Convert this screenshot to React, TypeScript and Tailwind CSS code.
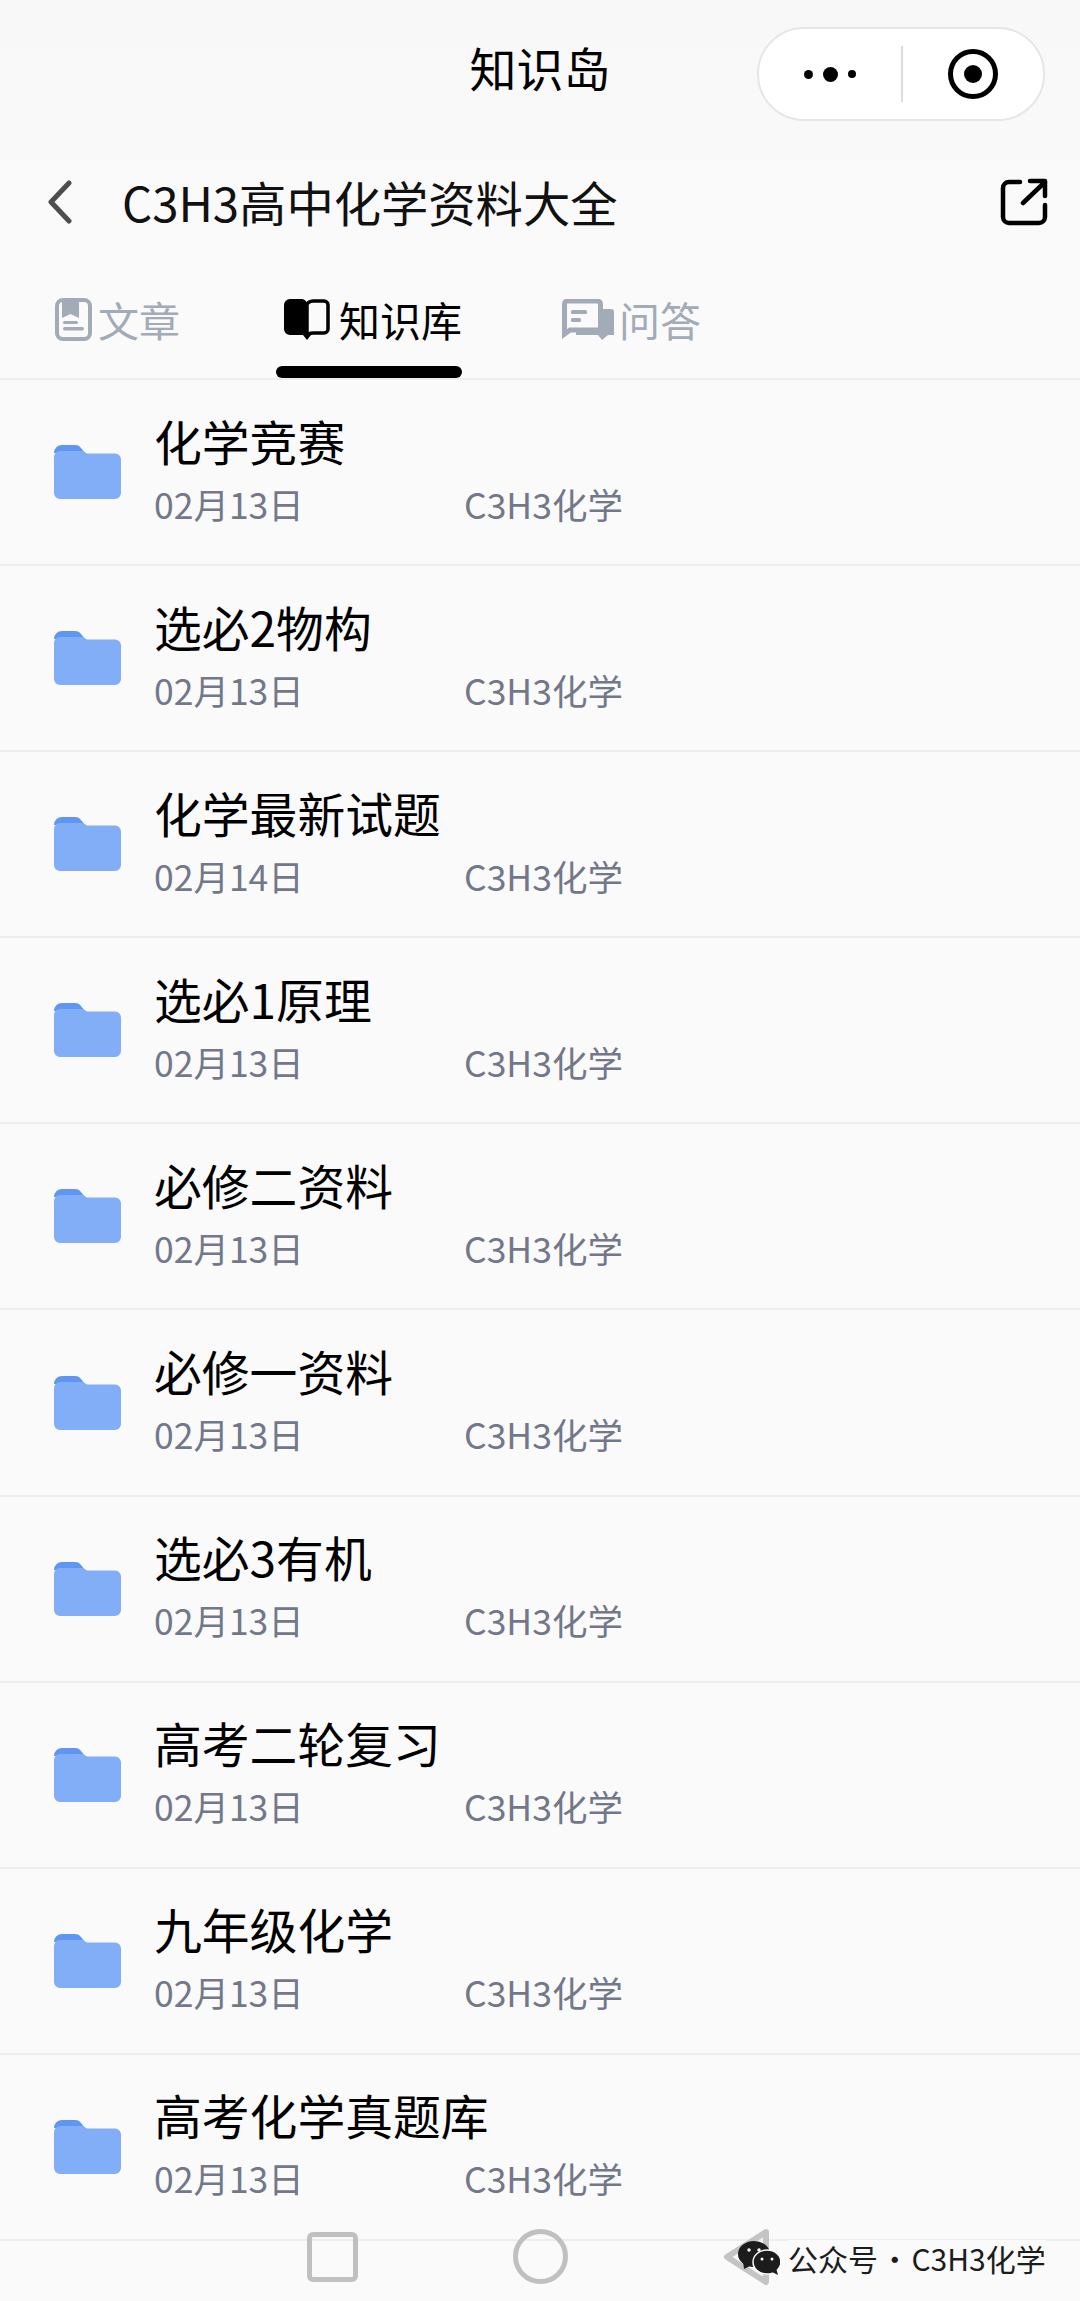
const CJK = "font-['Noto_Sans_CJK_SC','Noto_Sans',sans-serif]";

const rows = [
  ["化学竞赛", "02月13日"],
  ["选必2物构", "02月13日"],
  ["化学最新试题", "02月14日"],
  ["选必1原理", "02月13日"],
  ["必修二资料", "02月13日"],
  ["必修一资料", "02月13日"],
  ["选必3有机", "02月13日"],
  ["高考二轮复习", "02月13日"],
  ["九年级化学", "02月13日"],
  ["高考化学真题库", "02月13日"],
];

function FolderIcon() {
  return (
    <svg width="67" height="54" viewBox="0 0 67 54" className="shrink-0">
      <path d="M0 8a8 8 0 0 1 8-8h13c3 0 4.500 1 6 3l4 5H0z" fill="#5f96f2" />
      <path d="M0 12a6 6 0 0 1 6-6h23l4 2.500h28a6 6 0 0 1 6 6V48a6 6 0 0 1-6 6H6a6 6 0 0 1-6-6z" fill="#82aef8" />
    </svg>
  );
}

function ArticleIcon() {
  return (
    <svg width="37" height="43" viewBox="0 0 37 43" className="shrink-0">
      <rect x="2" y="2" width="33" height="39" rx="6" fill="none" stroke="#a3aab8" strokeWidth="4" />
      <path d="M7 3h17v17l-8.500-4L7 20z" fill="#a3aab8" />
      <rect x="8" y="23" width="15" height="3" rx="1.500" fill="#a3aab8" />
      <rect x="8" y="29" width="21" height="3.500" rx="1.700" fill="#a3aab8" />
    </svg>
  );
}

function BookIcon() {
  return (
    <svg width="46" height="42" viewBox="0 0 46 42" className="shrink-0">
      <path d="M6 1h11c3 0 6 2 6 5v34l-2-3H6a6 6 0 0 1-6-6V7a6 6 0 0 1 6-6z" fill="#000" />
      <path d="M23 35V7c0-2 3-4 6-4h11a4 4 0 0 1 4 4v24a4 4 0 0 1-4 4H29c-3 0-5 1-6 3z" fill="none" stroke="#000" strokeWidth="3.500" />
      <path d="M19 37h8l-4 5z" fill="#000" />
    </svg>
  );
}

function ChatIcon() {
  return (
    <svg width="52" height="41" viewBox="0 0 52 41" className="shrink-0">
      <path d="M2.500 28V5a3 3 0 0 1 3-3h30a3 3 0 0 1 3 3v26H8l-5.500 4z" fill="none" stroke="#a3aab8" strokeWidth="5" />
      <rect x="9" y="11" width="16" height="4" rx="1.500" fill="#a3aab8" />
      <rect x="9" y="19" width="10" height="4" rx="1.500" fill="#a3aab8" />
      <path d="M40 10h9a3 3 0 0 1 3 3v23h-6l-6 5-4-5H14v-3h26z" fill="#a3aab8" />
    </svg>
  );
}

function WeChatIcon() {
  return (
    <svg width="42" height="34" viewBox="0 0 42 34" className="shrink-0">
      <ellipse cx="16" cy="13" rx="16" ry="13" fill="#1c1c1c" />
      <path d="M5 20l1 8 8-4z" fill="#1c1c1c" />
      <ellipse cx="29" cy="21" rx="14" ry="12" fill="#1c1c1c" stroke="#fafafa" strokeWidth="1.500" />
      <path d="M34 31l6 3-2-7z" fill="#1c1c1c" />
      <circle cx="11" cy="9" r="1.700" fill="#fafafa" />
      <circle cx="21" cy="9" r="1.700" fill="#fafafa" />
      <circle cx="24" cy="18" r="1.500" fill="#fafafa" />
      <circle cx="34" cy="18" r="1.500" fill="#fafafa" />
    </svg>
  );
}

export default function App() {
  return (
    <div className={`relative w-[1080px] h-[2301px] overflow-hidden bg-[#fafafb] ${CJK}`}>
      <div className="bg-gradient-to-b from-[#f8f8f8] to-[#fafafb]">
        <header className="h-[148px] flex justify-center relative">
          <h1 className="text-[47px] leading-[60px] mt-[37px] font-normal text-black">知识岛</h1>
          <div className="absolute left-[757px] top-[27px] w-[288px] h-[94px] rounded-full bg-white border-2 border-[#e6e6e6] flex items-center">
            <div className="w-[142px] flex items-center justify-center gap-[10px]">
              <span className="w-[9px] h-[9px] rounded-full bg-black" />
              <span className="w-[15px] h-[15px] rounded-full bg-black" />
              <span className="w-[8px] h-[8px] rounded-full bg-black" />
            </div>
            <span className="w-[2px] h-[56px] bg-[#dcdcdc]" />
            <div className="flex-1 flex items-center">
              <svg width="52" height="52" viewBox="0 0 52 52" className="ml-[44px]">
                <circle cx="26" cy="26" r="22.500" fill="none" stroke="#000" strokeWidth="5" />
                <circle cx="26" cy="26" r="9" fill="#000" />
              </svg>
            </div>
          </div>
        </header>

        <div className="h-[108px] flex items-center pl-[46px] pr-[32px]">
          <svg width="28" height="44" viewBox="0 0 28 44" className="shrink-0">
            <path d="M23 3L5 22l18 19" fill="none" stroke="#4d4d4d" strokeWidth="5" strokeLinecap="round" strokeLinejoin="round" />
          </svg>
          <div className="ml-[48px] text-[47.300px] leading-[60px] text-[#111] flex-1">C3H3高中化学资料大全</div>
          <svg width="48" height="48" viewBox="0 0 48 48" className="shrink-0">
            <path d="M20 4H9a6 6 0 0 0-6 6v29a6 6 0 0 0 6 6h30a6 6 0 0 0 6-6V27" fill="none" stroke="#000" strokeWidth="4.500" strokeLinecap="round" />
            <path d="M23 25L45 4M30 3h15v15" fill="none" stroke="#000" strokeWidth="4.500" strokeLinecap="round" strokeLinejoin="round" />
          </svg>
        </div>
      </div>

      <nav className="h-[124px] pt-[41px] pl-[55px] flex items-start border-b-2 border-[#eeeeee]">
        <div className="flex items-center gap-[6px] h-[44px] text-[41px] leading-[44px] text-[#a3aab8]">
          <ArticleIcon />
          <span>文章</span>
        </div>
        <div className="ml-[96px] w-[186px] flex flex-col">
          <div className="flex items-center gap-[9px] h-[44px] pl-[8px] text-[41px] leading-[44px] text-black">
            <BookIcon />
            <span className="whitespace-nowrap">知识库</span>
          </div>
          <span className="mt-[25px] h-[12px] w-[186px] rounded-full bg-black" />
        </div>
        <div className="ml-[100px] flex items-center gap-[5px] h-[44px] text-[41px] leading-[44px] text-[#a3aab8]">
          <ChatIcon />
          <span>问答</span>
        </div>
      </nav>

      <ul>
        {rows.map(([title, date]) => (
          <li key={title} className="h-[186.100px] flex items-center pl-[54px] border-b-2 border-[#eeeeee]">
            <FolderIcon />
            <div className="ml-[33px]">
              <div className="text-[47.800px] leading-[60px] text-black mt-[-8px]">{title}</div>
              <div className="flex text-[35.500px] leading-[44px] mt-[11px] text-[#727889]">
                <span className="w-[310px]">{date}</span>
                <span>C3H3化学</span>
              </div>
            </div>
          </li>
        ))}
      </ul>

      <div className="absolute left-[307px] top-[2232px] w-[51px] h-[50px] rounded-[6px] border-[5px] border-[#c0c0c0]" />
      <div className="absolute left-[513px] top-[2229px] w-[55px] h-[55px] rounded-full border-[5px] border-[#c0c0c0]" />
      <svg width="50" height="60" viewBox="0 0 50 60" className="absolute left-[722px] top-[2227px]">
        <path d="M44 5L5 30l39 25z" fill="none" stroke="#c4c4c4" strokeWidth="6" strokeLinejoin="round" />
      </svg>
      <div className="absolute left-[738px] top-[2240px] flex items-center">
        <WeChatIcon />
        <span className="ml-[8px] bg-[#fafafa] text-[30px] leading-[36px] text-[#1c1c1c] whitespace-nowrap">
          公众号<span className="ml-[5px] tracking-[-10px]"> · </span><span className="ml-[15px]">C3H3化学</span>
        </span>
      </div>
    </div>
  );
}
